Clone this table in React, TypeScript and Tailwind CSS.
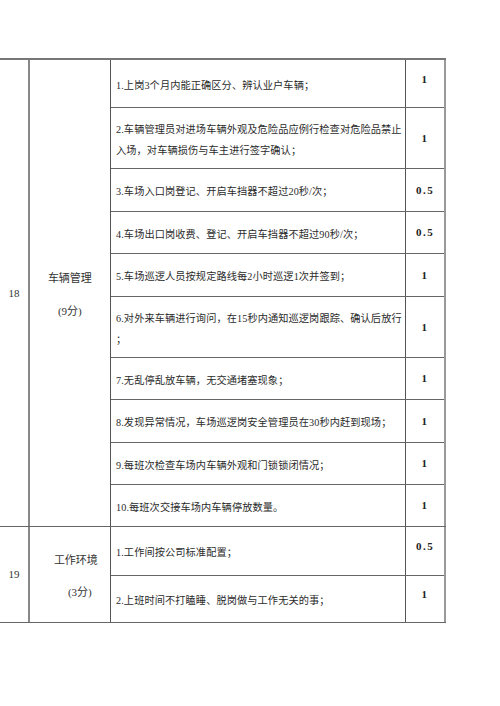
import React from 'react';

type Item = {
  text: React.ReactNode;
  score: string;
  h: number;
  scoreTop?: number;
};

const vehicleItems: Item[] = [
  { text: '1.上岗3个月内能正确区分、辨认业户车辆；', score: '1', h: 48, scoreTop: 11 },
  {
    text: (
      <>
        2.车辆管理员对进场车辆外观及危险品应例行检查对危险品禁止
        <br />
        入场，对车辆损伤与车主进行签字确认；
      </>
    ),
    score: '1',
    h: 61,
  },
  { text: '3.车场入口岗登记、开启车挡器不超过20秒/次；', score: '0.5', h: 43 },
  { text: '4.车场出口岗收费、登记、开启车挡器不超过90秒/次；', score: '0.5', h: 42 },
  { text: '5.车场巡逻人员按规定路线每2小时巡逻1次并签到；', score: '1', h: 43 },
  {
    text: (
      <>
        6.对外来车辆进行询问，在15秒内通知巡逻岗跟踪、确认后放行
        <br />；
      </>
    ),
    score: '1',
    h: 61,
  },
  { text: '7.无乱停乱放车辆，无交通堵塞现象；', score: '1', h: 42 },
  { text: '8.发现异常情况，车场巡逻岗安全管理员在30秒内赶到现场；', score: '1', h: 43 },
  { text: '9.每班次检查车场内车辆外观和门锁锁闭情况；', score: '1', h: 42 },
  { text: '10.每班次交接车场内车辆停放数量。', score: '1', h: 41 },
];

const envItems: Item[] = [
  { text: '1.工作间按公司标准配置；', score: '0.5', h: 49, scoreTop: 11 },
  { text: '2.上班时间不打瞌睡、脱岗做与工作无关的事；', score: '1', h: 46, scoreTop: 10 },
];

const font = "font-['Liberation_Serif','Noto_Sans_CJK_SC',serif]";

function Row({ item, last }: { item: Item; last: boolean }) {
  return (
    <div
      className={`flex ${last ? '' : 'border-b border-[#666]'}`}
      style={{ height: item.h }}
    >
      <div className="w-[295px] border-r border-[#555] flex items-center pl-[5px] pt-[3px] text-[10.2px] tracking-[0.1px] leading-[21px] text-[#2b2b2b] whitespace-nowrap">
        <div>{item.text}</div>
      </div>
      <div
        className={`w-[38px] flex justify-center text-[11px] font-bold tracking-[1.5px] text-[#222] ${
          item.scoreTop !== undefined ? 'items-start' : 'items-center'
        }`}
        style={item.scoreTop !== undefined ? { paddingTop: item.scoreTop } : undefined}
      >
        {item.score}
      </div>
    </div>
  );
}

function Group({
  no,
  title,
  points,
  items,
  labelShift,
}: {
  no: string;
  title: string;
  points: string;
  items: Item[];
  labelShift?: boolean;
}) {
  return (
    <div className="flex border-b border-[#666]">
      <div className="w-[30px] border-r-2 border-[#888] flex items-center justify-center text-[11px] text-[#333]">
        {no}
      </div>
      <div className="w-[82px] border-r border-[#555] flex flex-col items-center justify-center gap-[16px] text-[11px] text-[#333] pt-[3px]">
        <div className={labelShift ? 'pl-[12px]' : ''}>{title}</div>
        <div className={labelShift ? 'pl-[20px]' : ''}>{points}</div>
      </div>
      <div className="flex flex-col border-r-2 border-[#999]">
        {items.map((it, i) => (
          <Row key={i} item={it} last={i === items.length - 1} />
        ))}
      </div>
    </div>
  );
}

export default function App() {
  return (
    <div className={`w-[500px] h-[706px] bg-white ${font}`}>
      <div className="pt-[58px]">
        <div className="w-[446px] border-t-2 border-[#777]">
          <Group no="18" title="车辆管理" points="(9分)" items={vehicleItems} />
          <Group no="19" title="工作环境" points="(3分)" items={envItems} labelShift />
        </div>
      </div>
    </div>
  );
}
